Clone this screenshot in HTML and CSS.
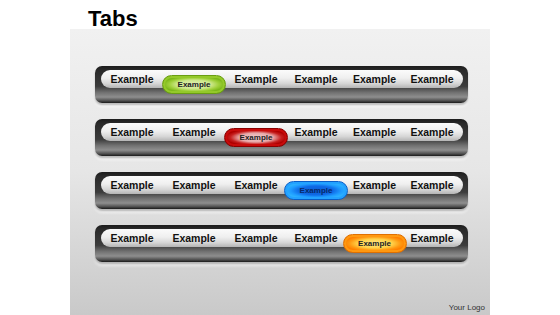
FILE: index.html
```html
<!DOCTYPE html>
<html>
<head>
<meta charset="utf-8">
<link rel="stylesheet" href="styles.css">
</head>
<body>
<h1 class="title">Tabs</h1>
<div class="panel">
  <div class="bar">
    <div class="track">
      <span class="tab">Example</span>
      <span class="pill green">Example</span>
      <span class="tab">Example</span>
      <span class="tab">Example</span>
      <span class="tab">Example</span>
      <span class="tab">Example</span>
    </div>
  </div>
  <div class="bar">
    <div class="track">
      <span class="tab">Example</span>
      <span class="tab">Example</span>
      <span class="pill red">Example</span>
      <span class="tab">Example</span>
      <span class="tab">Example</span>
      <span class="tab">Example</span>
    </div>
  </div>
  <div class="bar">
    <div class="track">
      <span class="tab">Example</span>
      <span class="tab">Example</span>
      <span class="tab">Example</span>
      <span class="pill blue">Example</span>
      <span class="tab">Example</span>
      <span class="tab">Example</span>
    </div>
  </div>
  <div class="bar">
    <div class="track">
      <span class="tab">Example</span>
      <span class="tab">Example</span>
      <span class="tab">Example</span>
      <span class="tab">Example</span>
      <span class="pill orange">Example</span>
      <span class="tab">Example</span>
    </div>
  </div>
  <div class="logo">Your Logo</div>
</div>
</body>
</html>
```
FILE: styles.css
```css
html, body {
  margin: 0;
  padding: 0;
  background: #ffffff;
}
body {
  width: 560px;
  height: 315px;
  overflow: hidden;
  font-family: "Liberation Sans", Arial, sans-serif;
}
.title {
  margin: 0;
  padding: 7px 0 0 88px;
  height: 22px;
  font-size: 22px;
  line-height: 24px;
  font-weight: bold;
  color: #000;
}
.panel {
  margin-left: 70px;
  width: 420px;
  height: 286px;
  box-sizing: border-box;
  padding: 37px 0 0 25px;
  background: linear-gradient(to bottom, #f1f1f1 0%, #e6e6e6 50%, #c9c9c9 100%);
  display: flex;
  flex-direction: column;
  gap: 16px;
  position: relative;
}
.bar {
  width: 373px;
  height: 37px;
  box-sizing: border-box;
  padding: 4px 5px 0 6px;
  border-radius: 7px;
  background: linear-gradient(to bottom, #1c1c1c 0%, #2a2a2a 12%, #3c3c3c 55%, #727272 72%, #8e8e8e 84%, #555 93%, #1a1a1a 100%);
  box-shadow: 0 2px 2px rgba(0,0,0,0.25), 0 4px 3px rgba(255,255,255,0.6);
}
.track {
  height: 18px;
  border-radius: 9px;
  background: linear-gradient(to bottom, #fbfbfb 0%, #efefef 45%, #d6d6d6 75%, #b4b4b4 100%);
  display: grid;
  grid-template-columns: 62px 62px 62px 58px 59px 56px;
  align-items: start;
  justify-items: center;
}
.tab {
  font-size: 10.5px;
  font-weight: bold;
  line-height: 18px;
  color: #111;
}
.pill {
  width: 64px;
  height: 19px;
  box-sizing: border-box;
  margin-top: 5px;
  border-radius: 10px;
  font-size: 8px;
  font-weight: bold;
  line-height: 17px;
  text-align: center;
  color: #222;
}
.green {
  border: 1px solid #6a9e12;
  background: radial-gradient(ellipse 50% 48% at 50% 50%, #e4f3b8 0%, #cde78a 55%, #9fd03a 80%, #7cb81a 100%);
  box-shadow: inset 0 0 0 2px #94c92a;
}
.red {
  border: 1px solid #8a0000;
  background: radial-gradient(ellipse 50% 48% at 50% 50%, #f1d0d0 0%, #e7a8a8 55%, #c72020 82%, #b00000 100%);
  box-shadow: inset 0 0 0 2px #c80a0a;
}
.blue {
  border: 1px solid #0a5ec8;
  background: radial-gradient(ellipse 50% 48% at 50% 50%, #0b5fd6 0%, #0f6ae6 55%, #1f9cff 82%, #2bb0ff 100%);
  box-shadow: inset 0 0 0 2px #23a2ff;
  color: #082a6a;
}
.orange {
  border: 1px solid #e07000;
  background: radial-gradient(ellipse 50% 48% at 50% 50%, #ffe88a 0%, #ffd24a 55%, #ff9a12 82%, #ff8000 100%);
  box-shadow: inset 0 0 0 2px #ff9810;
}
.logo {
  position: absolute;
  right: 5px;
  bottom: 3px;
  font-size: 8px;
  color: #333;
}
```
